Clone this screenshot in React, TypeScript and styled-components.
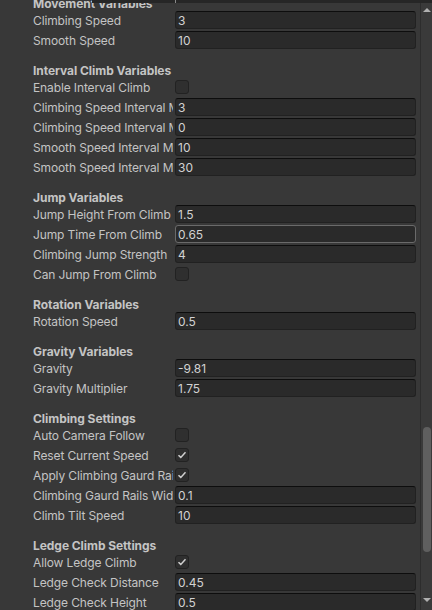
import React from 'react';
import styled, { createGlobalStyle } from 'styled-components';

const Global = createGlobalStyle`
  html, body { margin: 0; padding: 0; background: #383838; }
  body { font-family: Inter, "Noto Sans", sans-serif; }
`;

type Row = { label: string; value?: string; check?: boolean; focused?: boolean };
type Section = { title: string; rows: Row[] };

const sections: Section[] = [
  { title: 'Movement Variables', rows: [
    { label: 'Climbing Speed', value: '3' },
    { label: 'Smooth Speed', value: '10' },
  ] },
  { title: 'Interval Climb Variables', rows: [
    { label: 'Enable Interval Climb', check: false },
    { label: 'Climbing Speed Interval Max', value: '3' },
    { label: 'Climbing Speed Interval Min', value: '0' },
    { label: 'Smooth Speed Interval Max', value: '10' },
    { label: 'Smooth Speed Interval Min', value: '30' },
  ] },
  { title: 'Jump Variables', rows: [
    { label: 'Jump Height From Climb', value: '1.5' },
    { label: 'Jump Time From Climb', value: '0.65', focused: true },
    { label: 'Climbing Jump Strength', value: '4' },
    { label: 'Can Jump From Climb', check: false },
  ] },
  { title: 'Rotation Variables', rows: [
    { label: 'Rotation Speed', value: '0.5' },
  ] },
  { title: 'Gravity Variables', rows: [
    { label: 'Gravity', value: '-9.81' },
    { label: 'Gravity Multiplier', value: '1.75' },
  ] },
  { title: 'Climbing Settings', rows: [
    { label: 'Auto Camera Follow', check: false },
    { label: 'Reset Current Speed', check: true },
    { label: 'Apply Climbing Gaurd Rails', check: true },
    { label: 'Climbing Gaurd Rails Width', value: '0.1' },
    { label: 'Climb Tilt Speed', value: '10' },
  ] },
  { title: 'Ledge Climb Settings', rows: [
    { label: 'Allow Ledge Climb', check: true },
    { label: 'Ledge Check Distance', value: '0.45' },
    { label: 'Ledge Check Height', value: '0.5' },
  ] },
];

const Window = styled.div`
  position: relative;
  display: flex;
  width: 432px;
  height: 610px;
  overflow: hidden;
  background: #383838;
`;

const Content = styled.div`
  flex: 1;
  overflow: hidden;
  padding-right: 4px;
`;

const List = styled.div`
  display: flex;
  flex-direction: column;
  margin-top: -16px;
`;

const SectionBox = styled.div`
  display: flex;
  flex-direction: column;
  gap: 2px;
  padding-top: 12px;
`;

const Header = styled.div`
  height: 15px;
  line-height: 15px;
  margin-bottom: -2px;
  padding-left: 33px;
  font-size: 12px;
  font-weight: 700;
  letter-spacing: -0.05px;
  color: #c4c4c4;
  white-space: nowrap;
`;

const RowBox = styled.div`
  display: flex;
  align-items: center;
  gap: 2px;
  height: 18px;
  padding-left: 33px;
  &:last-child { margin-bottom: 2px; }
`;

const Label = styled.div`
  width: 140px;
  flex: none;
  overflow: hidden;
  white-space: nowrap;
  font-size: 12px;
  letter-spacing: -0.12px;
  color: #c4c4c4;
`;

const Field = styled.div<{ $focused?: boolean }>`
  flex: 1;
  height: 18px;
  box-sizing: border-box;
  display: flex;
  align-items: center;
  padding-left: 2px;
  background: #2a2a2a;
  border: 1px solid ${p => (p.$focused ? '#6a6a6a' : '#212121')};
  border-top-color: ${p => (p.$focused ? '#6a6a6a' : '#0d0d0d')};
  border-radius: 3px;
  font-size: 12px;
  color: #d2d2d2;
`;

const Check = styled.div`
  width: 14px;
  height: 14px;
  box-sizing: border-box;
  background: #2f2f2f;
  border: 1px solid #222222;
  border-radius: 3px;
  display: flex;
  align-items: center;
  justify-content: center;
`;

const Scrollbar = styled.div`
  position: relative;
  width: 11px;
  flex: none;
  background: #3a3a3a;
  border-left: 1px solid #2d2d2d;
  display: flex;
  flex-direction: column;
  align-items: center;
`;

const Arrow = styled.div<{ $down?: boolean }>`
  height: 20px;
  display: flex;
  align-items: center;
  justify-content: center;
  margin-top: ${p => (p.$down ? 'auto' : '0')};
`;

const Thumb = styled.div`
  position: absolute;
  left: 2px;
  top: 427px;
  width: 8px;
  height: 125px;
  border-radius: 4px;
  background: #5f5f5f;
`;

const TopStrip = styled.div`
  position: absolute;
  top: 0;
  left: 92px;
  right: 0;
  height: 3px;
  background: #262626;
`;

const Tick = styled.div`
  position: absolute;
  left: 83px;
  top: 0;
  width: 1px;
  height: 3px;
  background: #8a8a8a;
`;

const CheckMark = () => (
  <svg width="10" height="10" viewBox="0 0 10 10">
    <path d="M1.5 5.2 L3.8 7.4 L8.5 2.3" fill="none" stroke="#d0d0d0" strokeWidth="1.5" />
  </svg>
);

export default function App() {
  return (
    <Window>
      <Global />
      <Content>
        <List>
          {sections.map(s => (
            <SectionBox key={s.title}>
              <Header>{s.title}</Header>
              {s.rows.map(r => (
                <RowBox key={r.label}>
                  <Label>{r.label}</Label>
                  {r.check !== undefined ? (
                    <Check>{r.check && <CheckMark />}</Check>
                  ) : (
                    <Field $focused={r.focused}>{r.value}</Field>
                  )}
                </RowBox>
              ))}
            </SectionBox>
          ))}
        </List>
      </Content>
      <Scrollbar>
        <Arrow>
          <svg width="8" height="6" viewBox="0 0 8 6"><path d="M0 5 L4 1 L8 5 Z" fill="#b0b0b0" /></svg>
        </Arrow>
        <Thumb />
        <Arrow $down>
          <svg width="8" height="6" viewBox="0 0 8 6"><path d="M0 1 L4 5 L8 1 Z" fill="#b0b0b0" /></svg>
        </Arrow>
      </Scrollbar>
      <TopStrip><Tick /></TopStrip>
    </Window>
  );
}
